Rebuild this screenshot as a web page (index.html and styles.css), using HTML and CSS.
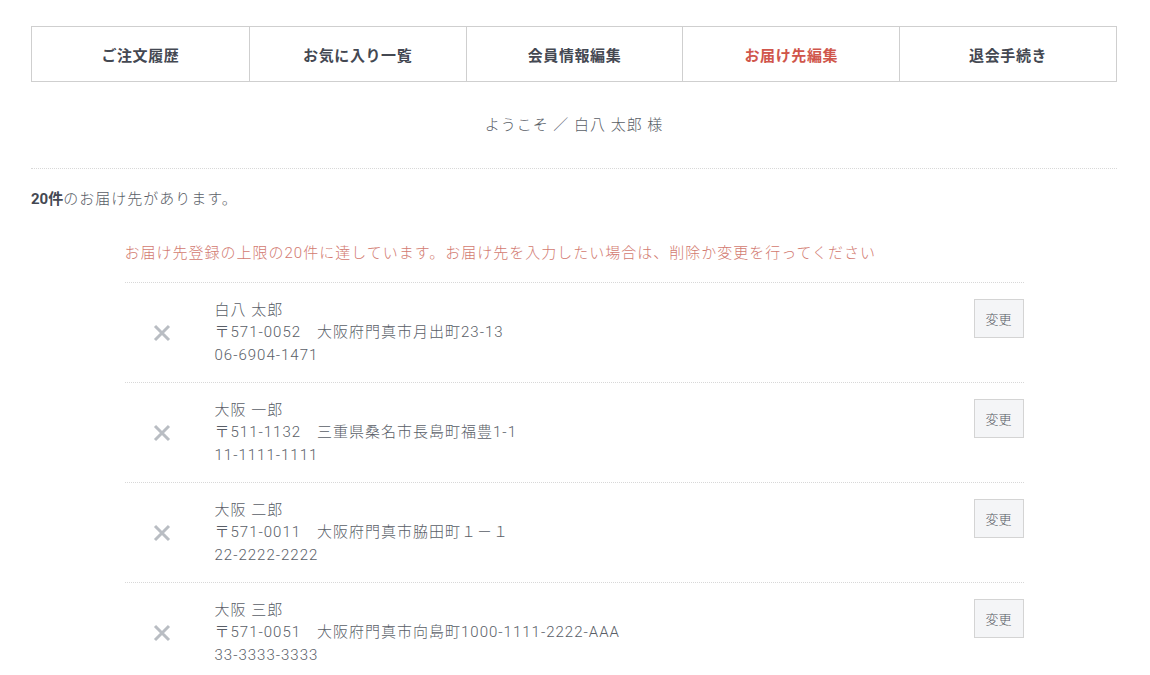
FILE: index.html
```html
<!DOCTYPE html>
<html lang="ja">
<head>
<meta charset="utf-8">
<link rel="stylesheet" href="styles.css">
</head>
<body>
<div class="page">
  <nav class="tabs">
    <a class="tab">ご注文履歴</a>
    <a class="tab">お気に入り一覧</a>
    <a class="tab">会員情報編集</a>
    <a class="tab active">お届け先編集</a>
    <a class="tab">退会手続き</a>
  </nav>
  <p class="welcome">ようこそ ／ 白八 太郎 様</p>
  <p class="count"><strong>20件</strong>のお届け先があります。</p>
  <div class="book">
    <p class="warn">お届け先登録の上限の20件に達しています。お届け先を入力したい場合は、削除か変更を行ってください</p>
    <ul class="list">
      <li class="row">
        <span class="del"><svg viewBox="0 0 20 20" width="20" height="20"><path d="M3 3L17 17M17 3L3 17"/></svg></span>
        <div class="addr">白八 太郎<br>〒571-0052　大阪府門真市月出町23-13<br>06-6904-1471</div>
        <button class="edit">変更</button>
      </li>
      <li class="row">
        <span class="del"><svg viewBox="0 0 20 20" width="20" height="20"><path d="M3 3L17 17M17 3L3 17"/></svg></span>
        <div class="addr">大阪 一郎<br>〒511-1132　三重県桑名市長島町福豊1-1<br>11-1111-1111</div>
        <button class="edit">変更</button>
      </li>
      <li class="row">
        <span class="del"><svg viewBox="0 0 20 20" width="20" height="20"><path d="M3 3L17 17M17 3L3 17"/></svg></span>
        <div class="addr">大阪 二郎<br>〒571-0011　大阪府門真市脇田町１－１<br>22-2222-2222</div>
        <button class="edit">変更</button>
      </li>
      <li class="row">
        <span class="del"><svg viewBox="0 0 20 20" width="20" height="20"><path d="M3 3L17 17M17 3L3 17"/></svg></span>
        <div class="addr">大阪 三郎<br>〒571-0051　大阪府門真市向島町1000-1111-2222-AAA<br>33-3333-3333</div>
        <button class="edit">変更</button>
      </li>
    </ul>
  </div>
</div>
</body>
</html>
```

FILE: styles.css
```css
* { box-sizing: border-box; }
html, body { margin: 0; padding: 0; background: #fff; }
body {
  font-family: Roboto, "Noto Sans CJK JP", sans-serif;
  color: #595e67;
  font-size: 15px;
  font-weight: 300;
  letter-spacing: 1px;
}
.page {
  width: 1086px;
  margin: 26px 0 0 31px;
}
.tabs {
  display: grid;
  grid-template-columns: repeat(5, 1fr);
  border: 1px solid #cfcfcf;
  height: 56px;
}
.tab {
  display: flex;
  align-items: center;
  justify-content: center;
  font-weight: 700;
  font-size: 15px;
  letter-spacing: 0.6px;
  color: #444852;
  border-left: 1px solid #cfcfcf;
}
.tab:first-child { border-left: none; }
.tab.active { color: #d0564b; }
.welcome {
  margin: 0;
  height: 87px;
  line-height: 87px;
  text-align: center;
  font-size: 15px;
  border-bottom: 1px dotted #d8d8d8;
}
.count {
  margin: 0;
  padding-top: 19px;
  line-height: 22px;
}
.count strong { font-weight: 700; color: #444852; letter-spacing: 0; }
.book {
  width: 899px;
  margin: 0 auto;
}
.warn {
  margin: 0;
  padding-top: 32px;
  line-height: 22px;
  color: #d27a70;
  font-size: 15px;
  height: 72px;
}
.list {
  list-style: none;
  margin: 0;
  padding: 0;
}
.row {
  display: flex;
  align-items: center;
  height: 100px;
  border-top: 1px dotted #d8d8d8;
}
.del {
  width: 90px;
  padding-left: 27px;
  display: flex;
  align-items: center;
}
.del svg { display: block; }
.del path {
  stroke: #b9bdc3;
  stroke-width: 3;
  fill: none;
}
.addr {
  flex: 1;
  line-height: 22.5px;
  font-size: 15px;
}
.edit {
  align-self: flex-start;
  margin-top: 16px;
  width: 50px;
  height: 39px;
  background: #f4f5f7;
  border: 1px solid #d4d4d4;
  font-family: inherit;
  font-weight: 300;
  font-size: 13px;
  letter-spacing: 0;
  color: #555a63;
  padding: 0;
}
```
